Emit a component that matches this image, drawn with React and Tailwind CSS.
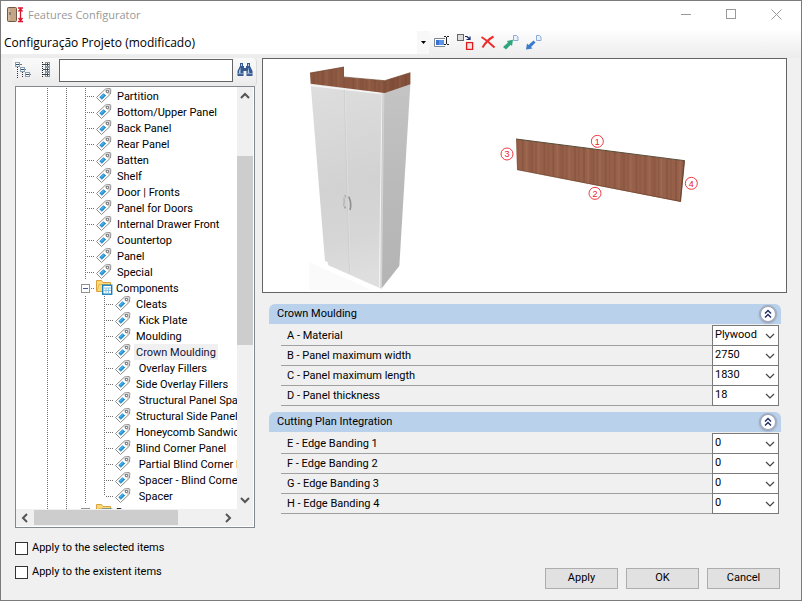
import React from "react";

const treeItems = [
  { label: "Partition" },
  { label: "Bottom/Upper Panel" },
  { label: "Back Panel" },
  { label: "Rear Panel" },
  { label: "Batten" },
  { label: "Shelf" },
  { label: "Door | Fronts" },
  { label: "Panel for Doors" },
  { label: "Internal Drawer Front" },
  { label: "Countertop" },
  { label: "Panel" },
  { label: "Special" },
];

const components = [
  "Cleats",
  " Kick Plate",
  "Moulding",
  "Crown Moulding",
  " Overlay Fillers",
  "Side Overlay Fillers",
  " Structural Panel Spacer",
  "Structural Side Panel",
  "Honeycomb Sandwich",
  "Blind Corner Panel",
  " Partial Blind Corner Panel",
  " Spacer - Blind Corner",
  " Spacer",
];

const groups = [
  {
    title: "Crown Moulding",
    rows: [
      { label: "A - Material", value: "Plywood" },
      { label: "B - Panel maximum width", value: "2750" },
      { label: "C - Panel maximum length", value: "1830" },
      { label: "D - Panel thickness", value: "18" },
    ],
  },
  {
    title: "Cutting Plan Integration",
    rows: [
      { label: "E - Edge Banding 1", value: "0" },
      { label: "F - Edge Banding 2", value: "0" },
      { label: "G - Edge Banding 3", value: "0" },
      { label: "H - Edge Banding 4", value: "0" },
    ],
  },
];

function Chevron({ className, d = "M1 3 L5 7 L9 3", width = 1.2 }) {
  return (
    <svg className={className} width="10" height="10" viewBox="0 0 10 10" fill="none" stroke="currentColor" strokeWidth={width}>
      <path d={d} />
    </svg>
  );
}

function TagIcon() {
  return (
    <svg className="shrink-0" width="16" height="16" viewBox="0 0 16 16">
      <path d="M.5 9.5 L9.5 1 L14 .5 L14.8 1.2 L14.5 6 L5.5 14.5 Z" fill="#fff" stroke="#8c8c8c" strokeLinejoin="round" />
      <path d="M8.5 3 L10 1.5 L13.8 1.2 L14.2 2 L14 5.5 L12.5 7 Z" fill="#d2d2d2" />
      <rect x="10.5" y="2.5" width="2" height="2" fill="#fff" stroke="#777" strokeWidth=".8" />
      <path d="M3.3 9.3 L7.5 5.2 L10.2 7.6 L5.8 11.8 Z" fill="#2590d0" />
      <path d="M5 9.5 L8 6.6" stroke="#6fc0ec" />
    </svg>
  );
}

function FolderIcon() {
  return (
    <svg className="shrink-0" width="17" height="16" viewBox="0 0 17 16">
      <path d="M.5 11.5 V.5 H5.5 L7 2.5 H14.5 V11.5 Z" fill="#ffd978" stroke="#d9a23c" />
      <path d="M1 11 L3 4.5 H14" fill="none" stroke="#e9b653" />
      <rect x="6.7" y="5.2" width="9" height="9" fill="#fff" stroke="#1380bd" strokeWidth="1.4" />
      <path d="M8 8 H15 M8 10.5 H15 M10 8 V13.5 M12.5 8 V13.5" stroke="#8cc4e4" />
    </svg>
  );
}

function Dots() {
  return (
    <span className="h-full w-px shrink-0 bg-[repeating-linear-gradient(to_bottom,#707070_0_1px,transparent_1px_2px)]" />
  );
}

function Branch() {
  return (
    <span className="mr-px h-px w-[9px] shrink-0 self-center bg-[repeating-linear-gradient(to_right,transparent_0_1px,#707070_1px_2px)]" />
  );
}

function Guides() {
  return (
    <span className="flex h-full shrink-0 gap-[18px] pl-[31px] pr-[18px]">
      <Dots />
      <Dots />
    </span>
  );
}

function Leaf({ label, nested, last, selected }) {
  return (
    <li className="flex h-4 items-center">
      <Guides />
      <Dots />
      {nested && (
        <span className={last ? "ml-[18px] flex h-2 self-start" : "ml-[18px] flex h-full"}>
          <Dots />
        </span>
      )}
      <Branch />
      <TagIcon />
      <span
        className={
          selected
            ? "ml-[3px] h-4 whitespace-pre bg-[#f0f0f0] px-[2px] pt-px text-[#14143c]"
            : "ml-[3px] h-4 whitespace-pre px-[2px] pt-px"
        }
      >
        {label}
      </span>
    </li>
  );
}

function Folder({ label, closed }) {
  return (
    <li className="flex h-4 items-center">
      <Guides />
      <span className="-ml-1 flex size-[9px] shrink-0 items-center justify-center border border-[#919191] bg-white">
        <span className="h-px w-[5px] bg-[#3c5ba0]" />
        {closed && <span className="-ml-[3px] h-[5px] w-px bg-[#3c5ba0]" />}
      </span>
      <span className="mr-px h-px w-[5px] shrink-0 bg-[repeating-linear-gradient(to_right,transparent_0_1px,#707070_1px_2px)]" />
      <FolderIcon />
      <span className="ml-px h-4 px-[2px] pt-px">{label}</span>
    </li>
  );
}

function TreePanel() {
  return (
    <div className="flex min-h-0 flex-1 flex-col border border-[#828790] bg-white pb-px pr-px">
      <div className="flex min-h-0 flex-1">
        <ul className="min-w-0 flex-1 overflow-hidden whitespace-nowrap pt-px leading-4">
          {treeItems.map((item) => (
            <Leaf key={item.label} label={item.label} />
          ))}
          <Folder label="Components" />
          {components.map((label, i) => (
            <Leaf key={label} label={label} nested selected={label === "Crown Moulding"} last={i === components.length - 1} />
          ))}
          <Folder label="Drawers" closed />
        </ul>
        <div className="flex w-4 flex-col bg-[#f0f0f0] text-[#555]">
          <Chevron className="mx-auto my-[4px] shrink-0" d="M1 7 L5 3 L9 7" width={2} />
          <div className="grow-[51]" />
          <div className="grow-[190] bg-[#cdcdcd]" />
          <div className="grow-[146]" />
          <Chevron className="mx-auto my-[4px] shrink-0" width={2} />
        </div>
      </div>
      <div className="flex h-[17px] items-center bg-[#f0f0f0] pr-4 text-[#555]">
        <Chevron className="mx-[4px] shrink-0" d="M7 1 L3 5 L7 9" width={2} />
        <div className="h-[15px] grow-[145] bg-[#cdcdcd]" />
        <div className="grow-[41]" />
        <Chevron className="mx-[4px] shrink-0" d="M3 1 L7 5 L3 9" width={2} />
      </div>
    </div>
  );
}

function SearchBar() {
  return (
    <div className="-ml-[3px] -mr-[2px] flex h-7 items-start rounded border-r border-[#dcdcdc] bg-linear-to-b from-[#fafafa] to-[#ebebeb] pt-px">
      <button type="button" aria-label="Collapse all" className="ml-[3px] mt-[3px]">
        <svg width="16" height="16" viewBox="0 0 16 16" fill="none" shapeRendering="crispEdges">
          <path d="M2.5 5 V16 M7.5 10 V16" stroke="#333" strokeDasharray="1 1" />
          <path d="M5 2.5 H7 M9 7.5 H11 M14 12.5 H16" stroke="#777" />
          <rect x=".5" y=".5" width="4" height="4" fill="#fff" stroke="#8aa0b0" />
          <rect x="5.5" y="5.5" width="4" height="4" fill="#fff" stroke="#8aa0b0" />
          <rect x="10.5" y="10.5" width="4" height="4" fill="#fff" stroke="#8aa0b0" />
          <path d="M1 2.5 H4 M6 7.5 H9 M11 12.5 H14" stroke="#234f75" />
        </svg>
      </button>
      <button type="button" aria-label="Expand all" className="ml-[10px] mt-[3px]">
        <svg width="9" height="16" viewBox="0 0 9 16" fill="none" shapeRendering="crispEdges">
          <path d="M1.5 0 V16" stroke="#222" strokeDasharray="1 1" />
          <rect x="4.5" y=".5" width="4" height="4" fill="#fff" stroke="#8795a0" />
          <rect x="4.5" y="5.5" width="4" height="4" fill="#fff" stroke="#8795a0" />
          <rect x="4.5" y="10.5" width="4" height="4" fill="#fff" stroke="#8795a0" />
          <path d="M2 2.5 H8 M2 7.5 H8 M2 12.5 H8 M6.5 1 V4 M6.5 6 V9 M6.5 11 V14" stroke="#3a4c5c" />
        </svg>
      </button>
      <input aria-label="Search" className="ml-[9px] h-[23px] min-w-0 flex-1 border border-[#646464] bg-white px-1 outline-none" />
      <button type="button" aria-label="Find" className="ml-1 mr-[3px] mt-[3px]">
        <svg width="16" height="16" viewBox="0 0 16 16">
          <path d="M3 1 H6 V4 H7 V6 H9 V4 H10 V1 H13 V4 L15.5 9 V14 H9.5 V9 H6.5 V14 H.5 V9 L3 4 Z" fill="#35588f" />
          <path d="M4 2 H5 V4 H4 Z M11 2 H12 V4 H11 Z M3.5 5.5 L2 9 V11 H3.5 Z M11.5 5.5 L10.8 9 V11 H12.3 Z" fill="#b7cdea" />
          <path d="M1 11.7 H6 M10 11.7 H15" stroke="#8fadd6" />
        </svg>
      </button>
    </div>
  );
}

function Preview() {
  return (
    <div className="h-[235px] border border-[#646464] bg-white">
      <svg className="h-full w-full" viewBox="0 0 523 233" role="img" aria-label="Crown moulding preview">
        <defs>
          <linearGradient id="front" x1="0" y1="0" x2="0.1" y2="1">
            <stop offset="0" stopColor="#dedede" />
            <stop offset="0.55" stopColor="#d2d2d2" />
            <stop offset="0.8" stopColor="#d6d6d6" />
            <stop offset="1" stopColor="#dedede" />
          </linearGradient>
          <linearGradient id="side" x1="0" y1="0" x2="0" y2="1">
            <stop offset="0" stopColor="#c4c4c4" />
            <stop offset="0.5" stopColor="#bababa" />
            <stop offset="1" stopColor="#b4b4b4" />
          </linearGradient>
          <pattern id="wood" width="92" height="300" patternUnits="userSpaceOnUse">
            <rect width="92" height="300" fill="#96604a" />
            <path d="M6 0 V300 M34 0 V300 M71 0 V300" stroke="#8c5741" strokeWidth="6" />
            <path d="M18 0 V300 M54 0 V300" stroke="#9e6950" strokeWidth="5" />
            <path d="M27 0 V300 M46 0 V300 M83 0 V300" stroke="#87523b" strokeWidth="2" />
          </pattern>
        </defs>

        {/* cabinet */}
        <svg x="27" y="-1" width="140" height="240" viewBox="0 0 420 720">
          <path d="M58 612 L110 635 L245 697 H58 Z" fill="#fafafa" />
          <path d="M62 78 L274 104 L274 692 L115 622 L113 612 L105 609 Z" fill="url(#front)" />
          <path d="M274 104 L361 79 L328 624 L274 692 Z" fill="url(#side)" />
          <path d="M63 82 L274 106" stroke="#f4f4f4" strokeWidth="5" />
          <path d="M276 106 L268 688" stroke="#f2f2f2" strokeWidth="3" />
          <path d="M281 104 L274 690" stroke="#d2d2d2" strokeWidth="4" />
          <path d="M163 95 L179 647" stroke="#c4c4c4" strokeWidth="2" />
          <path d="M165 95 L181 647" stroke="#e6e6e6" strokeWidth="2" />
          <path d="M166 412 Q157 432 166 451" fill="none" stroke="#a0a0a0" strokeWidth="5" />
          <path d="M176 416 Q186 436 180 456" fill="none" stroke="#929292" strokeWidth="5" />
          <path d="M164 414 Q158 432 164 446" fill="none" stroke="#e6e6e6" strokeWidth="2" />
          <path d="M60 45 L162 27 V58 L284 68 L361 44 L361 79 L284 105 L62 77 Z" fill="url(#wood)" />
          <path d="M284 68 L361 44 L361 79 L284 105 Z" fill="#5e2f1a" fillOpacity="0.3" />
          <path d="M60 45 L162 27 V58 L284 68 V105 L62 77 Z" fill="#6b3a22" fillOpacity="0.2" />
          <path d="M60 45 L162 27 M162 57 L284 68 L361 44" fill="none" stroke="#6b4028" strokeWidth="2" />
        </svg>

        {/* moulding board with its numbered edges */}
        <svg x="227" y="61" width="220" height="90" viewBox="0 0 660 270">
          <path d="M78 57 L584 122 L572 246 L81 149 Z" fill="url(#wood)" />
          <path d="M78 57 L584 122" stroke="#574d38" strokeWidth="3" />
          <path d="M583 122 L571 245" stroke="#6a4933" strokeWidth="4" />
          <path d="M81 149 L572 244" stroke="#6f452e" strokeWidth="2" />
          <g fill="none" stroke="#ee3b42" strokeWidth="3">
            <circle cx="322" cy="64" r="18" />
            <circle cx="315" cy="220" r="18" />
            <circle cx="51" cy="102" r="18" />
            <circle cx="604" cy="190" r="18" />
          </g>
          <g fill="#e8202a" fontFamily="Liberation Sans, sans-serif" fontSize="27" textAnchor="middle">
            <text x="322" y="74">1</text>
            <text x="315" y="230">2</text>
            <text x="51" y="112">3</text>
            <text x="604" y="200">4</text>
          </g>
        </svg>
      </svg>
    </div>
  );
}

function Group({ title, rows }) {
  return (
    <section className="pb-[6px]">
      <header className="flex h-5 items-center justify-between rounded-t-md bg-[#b9d1ea] pl-2 pr-1">
        <h2>{title}</h2>
        <button type="button" aria-label={"Collapse " + title} className="flex size-[18px] items-center justify-center rounded-full border-2 border-[#a2abc0] bg-white shadow-sm">
          <svg width="8" height="10" viewBox="0 0 8 10" fill="none" stroke="#1c2b63" strokeWidth="1.4">
            <path d="M1 4.5 L4 1.5 L7 4.5 M1 8.5 L4 5.5 L7 8.5" />
          </svg>
        </button>
      </header>
      <div className="ml-3 mr-[2px] pt-px">
        <div className="border-t border-transparent">
          {rows.map((row) => (
            <label key={row.label} className="flex h-5 items-stretch">
              <span className="flex flex-1 items-center border-b border-[#a0a0a0] pl-[6px] pt-[2px]">{row.label}</span>
              <span className="relative -mt-px flex w-[67px]">
                <select
                  defaultValue={row.value}
                  className="w-full appearance-none border border-[#7a7a7a] bg-white pl-[2px] outline-none"
                >
                  <option>{row.value}</option>
                </select>
                <Chevron className="pointer-events-none absolute right-1 top-[6px] text-[#444]" />
              </span>
            </label>
          ))}
        </div>
      </div>
    </section>
  );
}

function TitleBar() {
  return (
    <header className="flex h-[30px] shrink-0 items-start bg-white font-['Open_Sans',sans-serif] text-[11px] leading-7 text-[#999]">
      <svg className="ml-[6px] mt-[6px]" width="17" height="16" viewBox="0 0 17 16">
        <rect x=".5" y=".5" width="9" height="14" rx="1" fill="#c4a585" stroke="#735943" />
        <path d="M2 2 V13" stroke="#e2cdb4" />
        <path d="M3 5 V8" stroke="#6f6f6f" strokeWidth="1.5" />
        <path d="M11 1 H16 M11 14.5 H16 M13.5 2 V14 M11.5 4.5 L13.5 2 L15.5 4.5 M11.5 11 L13.5 13.5 L15.5 11" fill="none" stroke="#d9142c" strokeWidth="1.3" />
      </svg>
      <h1 className="ml-1 flex-1">Features Configurator</h1>
      <button type="button" aria-label="Minimize" className="flex h-[27px] w-[45px] items-center justify-center">
        <svg width="11" height="11" viewBox="0 0 11 11" stroke="#999">
          <path d="M0 5.5 H10" />
        </svg>
      </button>
      <button type="button" aria-label="Maximize" className="flex h-[27px] w-[45px] items-center justify-center">
        <svg width="11" height="11" viewBox="0 0 11 11" fill="none" stroke="#999">
          <rect x=".5" y=".5" width="9" height="9" />
        </svg>
      </button>
      <button type="button" aria-label="Close" className="mr-[2px] flex h-[27px] w-[45px] items-center justify-center">
        <svg width="11" height="11" viewBox="0 0 11 11" stroke="#999">
          <path d="M.5 .5 L10.5 10.5 M10.5 .5 L.5 10.5" />
        </svg>
      </button>
    </header>
  );
}

function Toolbar() {
  return (
    <div className="flex h-[27px] shrink-0 items-start bg-linear-to-b from-[#fdfdfd] to-[#ececec]">
      <div className="relative flex h-[23px] w-[428px]">
        <select
          aria-label="Configuration"
          className="w-full appearance-none bg-white pl-[3px] font-['Open_Sans',sans-serif] text-[12px] text-black outline-none"
        >
          <option>Configuração Projeto (modificado)</option>
        </select>
        <span className="pointer-events-none absolute inset-y-0 right-0 flex w-3 items-center justify-center bg-[#f8f8f8]">
          <svg width="5" height="3" viewBox="0 0 5 3">
            <path d="M0 0 H5 L2.5 3 Z" />
          </svg>
        </span>
      </div>
      <div className="ml-[5px] mt-[3px] flex gap-[7px]">
        <button type="button" aria-label="Rename">
          <svg width="16" height="16" viewBox="0 0 16 16" fill="none">
            <path d="M11 4.5 H.5 V12.5 H11" fill="#fff" stroke="#7c8795" />
            <rect x="2" y="6" width="8" height="5" fill="#5b93e6" />
            <rect x="2" y="6" width="3" height="5" fill="#3b71cf" />
            <path d="M10 2.5 H12 M13 2.5 H15 M12.5 3 V10 M10 10.5 H12 M13 10.5 H15" stroke="#222" />
          </svg>
        </button>
        <button type="button" aria-label="Replace">
          <svg width="17" height="16" viewBox="0 0 17 16" fill="none">
            <rect x=".5" y=".5" width="6" height="6" fill="#dedede" stroke="#666" />
            <path d="M8 2.5 H10 L12.5 5 M13 2.5 V5.5 H9.5" stroke="#13256f" strokeWidth="1.2" />
            <rect x="9.6" y="8.6" width="6" height="6.8" fill="#f1e6e6" stroke="#e01b1b" strokeWidth="1.3" />
          </svg>
        </button>
        <button type="button" aria-label="Delete">
          <svg width="15" height="16" viewBox="0 0 15 16" fill="none" stroke="#ee2c2c">
            <path d="M.5 3 Q7 7 13.5 13.5" strokeWidth="2" />
            <path d="M12.5 2.5 Q6 6 1.5 13.5" strokeWidth="2" />
          </svg>
        </button>
        <button type="button" aria-label="Export">
          <svg width="16" height="16" viewBox="0 0 16 16">
            <path d="M0 13 L5 8.5 L3.8 7 L10 5.8 L9 12 L7.8 10.8 L3 15.5 Z" fill="#2fa57d" />
            <path d="M10.5 1.5 H13.5 L15 3 V6.5 H10.5 Z" fill="#e8f0fb" stroke="#8cabd6" />
          </svg>
        </button>
        <button type="button" aria-label="Import">
          <svg width="16" height="16" viewBox="0 0 16 16">
            <path d="M0 15.5 L1 9.5 L2.5 11 L7.5 6.5 L9.5 8.5 L5 13 L6.5 14.5 Z" fill="#3a7acb" />
            <path d="M10.5 1.5 H13.5 L15 3 V6.5 H10.5 Z" fill="#e8f0fb" stroke="#8cabd6" />
          </svg>
        </button>
      </div>
    </div>
  );
}

export default function App() {
  return (
    <div className="flex h-screen flex-col border border-[#7b7b7b] bg-[#f0f0f0] font-[Roboto,sans-serif] text-[11px] text-black">
      <TitleBar />
      <Toolbar />
      <main className="flex min-h-0 flex-1 gap-[7px] px-[14px]">
        <div className="flex w-[240px] shrink-0 flex-col">
          <SearchBar />
          <TreePanel />
        </div>
        <div className="min-w-0 flex-1">
          <Preview />
          <div className="pl-[7px] pr-[6px] pt-[11px]">
            {groups.map((group) => (
              <Group key={group.title} title={group.title} rows={group.rows} />
            ))}
          </div>
        </div>
      </main>
      <footer className="flex h-[72px] shrink-0 items-start justify-between pl-[14px] pr-[21px]">
        <div className="flex flex-col gap-2 pt-3">
          <label className="flex h-4 items-center gap-1">
            <input type="checkbox" className="size-[13px] appearance-none border border-[#333] bg-white" />
            Apply to the selected items
          </label>
          <label className="flex h-4 items-center gap-1">
            <input type="checkbox" className="size-[13px] appearance-none border border-[#333] bg-white" />
            Apply to the existent items
          </label>
        </div>
        <div className="flex gap-2 pt-10">
          <button type="button" className="h-[21px] w-[73px] border border-[#adadad] bg-[#e1e1e1]">Apply</button>
          <button type="button" className="h-[21px] w-[73px] border border-[#adadad] bg-[#e1e1e1]">OK</button>
          <button type="button" className="h-[21px] w-[73px] border border-[#adadad] bg-[#e1e1e1]">Cancel</button>
        </div>
      </footer>
    </div>
  );
}
